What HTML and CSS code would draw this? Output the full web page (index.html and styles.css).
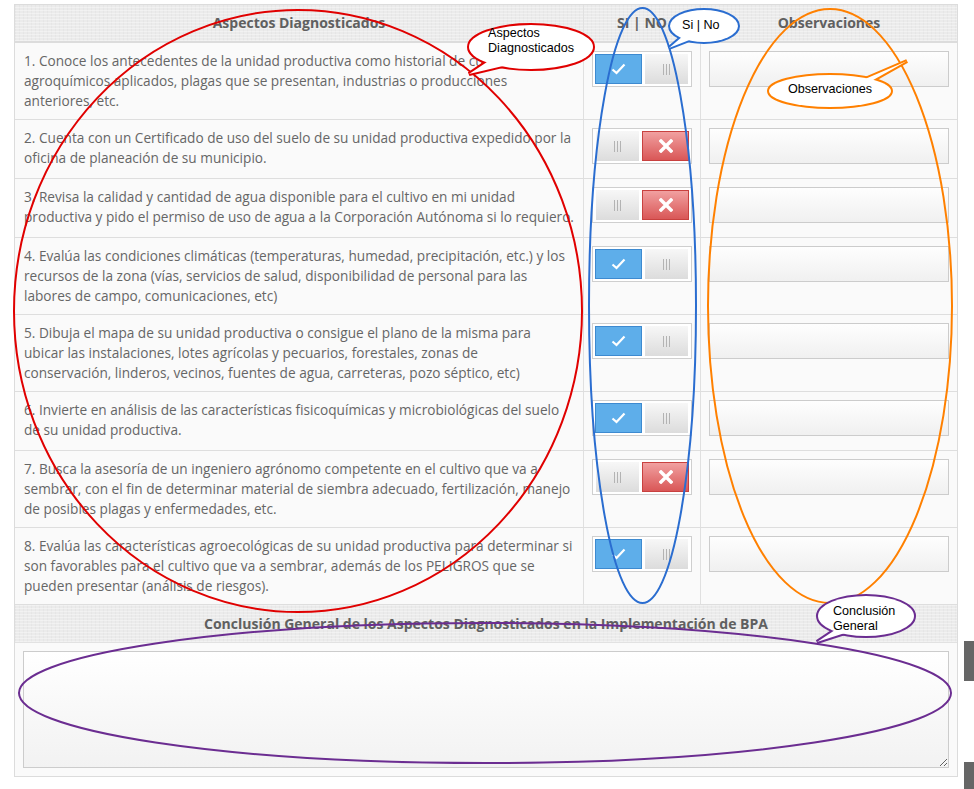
FILE: index.html
```html
<!DOCTYPE html>
<html lang="es">
<head>
<meta charset="utf-8">
<title>Aspectos Diagnosticados</title>
<link rel="stylesheet" href="styles.css">
</head>
<body>
<div class="page">
  <div class="sheet">
    <div class="row head">
      <div class="cell hq">Aspectos Diagnosticados</div>
      <div class="cell ht">SI | NO</div>
      <div class="cell ho">Observaciones</div>
    </div>

    <div class="row">
      <div class="cell q">1. Conoce los antecedentes de la unidad productiva como historial de cultivos,<br>agroquímicos aplicados, plagas que se presentan, industrias o producciones<br>anteriores, etc.</div>
      <div class="cell t"><div class="toggle yes"><span class="btn on"><svg width="15" height="12" viewBox="0 0 15 12"><path d="M1.5 6.5 L5.5 10 L13.5 1.5" fill="none" stroke="#fff" stroke-width="2.2"/></svg></span><span class="btn off"><i></i><i></i><i></i></span></div></div>
      <div class="cell o"><div class="obs"></div></div>
    </div>

    <div class="row">
      <div class="cell q">2. Cuenta con un Certificado de uso del suelo de su unidad productiva expedido por la<br>oficina de planeación de su municipio.</div>
      <div class="cell t"><div class="toggle no"><span class="btn off"><i></i><i></i><i></i></span><span class="btn neg"><svg width="14" height="14" viewBox="0 0 14 14"><path d="M2 2 L12 12 M12 2 L2 12" stroke="#fff" stroke-width="3.4" stroke-linecap="square"/></svg></span></div></div>
      <div class="cell o"><div class="obs"></div></div>
    </div>

    <div class="row">
      <div class="cell q">3. Revisa la calidad y cantidad de agua disponible para el cultivo en mi unidad<br>productiva y pido el permiso de uso de agua a la Corporación Autónoma si lo requiero.</div>
      <div class="cell t"><div class="toggle no"><span class="btn off"><i></i><i></i><i></i></span><span class="btn neg"><svg width="14" height="14" viewBox="0 0 14 14"><path d="M2 2 L12 12 M12 2 L2 12" stroke="#fff" stroke-width="3.4" stroke-linecap="square"/></svg></span></div></div>
      <div class="cell o"><div class="obs"></div></div>
    </div>

    <div class="row">
      <div class="cell q">4. Evalúa las condiciones climáticas (temperaturas, humedad, precipitación, etc.) y los<br>recursos de la zona (vías, servicios de salud, disponibilidad de personal para las<br>labores de campo, comunicaciones, etc)</div>
      <div class="cell t"><div class="toggle yes"><span class="btn on"><svg width="15" height="12" viewBox="0 0 15 12"><path d="M1.5 6.5 L5.5 10 L13.5 1.5" fill="none" stroke="#fff" stroke-width="2.2"/></svg></span><span class="btn off"><i></i><i></i><i></i></span></div></div>
      <div class="cell o"><div class="obs"></div></div>
    </div>

    <div class="row">
      <div class="cell q">5. Dibuja el mapa de su unidad productiva o consigue el plano de la misma para<br>ubicar las instalaciones, lotes agrícolas y pecuarios, forestales, zonas de<br>conservación, linderos, vecinos, fuentes de agua, carreteras, pozo séptico, etc)</div>
      <div class="cell t"><div class="toggle yes"><span class="btn on"><svg width="15" height="12" viewBox="0 0 15 12"><path d="M1.5 6.5 L5.5 10 L13.5 1.5" fill="none" stroke="#fff" stroke-width="2.2"/></svg></span><span class="btn off"><i></i><i></i><i></i></span></div></div>
      <div class="cell o"><div class="obs"></div></div>
    </div>

    <div class="row">
      <div class="cell q">6. Invierte en análisis de las características fisicoquímicas y microbiológicas del suelo<br>de su unidad productiva.</div>
      <div class="cell t"><div class="toggle yes"><span class="btn on"><svg width="15" height="12" viewBox="0 0 15 12"><path d="M1.5 6.5 L5.5 10 L13.5 1.5" fill="none" stroke="#fff" stroke-width="2.2"/></svg></span><span class="btn off"><i></i><i></i><i></i></span></div></div>
      <div class="cell o"><div class="obs"></div></div>
    </div>

    <div class="row">
      <div class="cell q">7. Busca la asesoría de un ingeniero agrónomo competente en el cultivo que va a<br>sembrar, con el fin de determinar material de siembra adecuado, fertilización, manejo<br>de posibles plagas y enfermedades, etc.</div>
      <div class="cell t"><div class="toggle no"><span class="btn off"><i></i><i></i><i></i></span><span class="btn neg"><svg width="14" height="14" viewBox="0 0 14 14"><path d="M2 2 L12 12 M12 2 L2 12" stroke="#fff" stroke-width="3.4" stroke-linecap="square"/></svg></span></div></div>
      <div class="cell o"><div class="obs"></div></div>
    </div>

    <div class="row">
      <div class="cell q">8. Evalúa las características agroecológicas de su unidad productiva para determinar si<br>son favorables para el cultivo que va a sembrar, además de los PELIGROS que se<br>pueden presentar (análisis de riesgos).</div>
      <div class="cell t"><div class="toggle yes"><span class="btn on"><svg width="15" height="12" viewBox="0 0 15 12"><path d="M1.5 6.5 L5.5 10 L13.5 1.5" fill="none" stroke="#fff" stroke-width="2.2"/></svg></span><span class="btn off"><i></i><i></i><i></i></span></div></div>
      <div class="cell o"><div class="obs"></div></div>
    </div>

    <div class="concl-head">Conclusión General de los Aspectos Diagnosticados en la Implementación de BPA</div>
    <div class="concl-body"><textarea class="concl-text"></textarea></div>
  </div>

  <svg class="marks" width="974" height="789" viewBox="0 0 974 789">
    <rect x="964" y="641" width="10" height="40" fill="#666"/>
    <rect x="964" y="762" width="10" height="27" fill="#666"/>

    <ellipse cx="298" cy="311" rx="284" ry="301" fill="none" stroke="#e00000" stroke-width="2"/>
    <ellipse cx="642.5" cy="305.5" rx="53.5" ry="297.5" fill="none" stroke="#2a6dd0" stroke-width="2"/>
    <ellipse cx="830" cy="306" rx="122" ry="297" fill="none" stroke="#ff8000" stroke-width="2"/>
    <ellipse cx="485" cy="693" rx="466" ry="70" fill="none" stroke="#6b2d91" stroke-width="2"/>

    <g fill="#fff" stroke="#e00000" stroke-width="4">
      <ellipse cx="531" cy="47" rx="62" ry="22"/>
      <polygon points="490,60 469,74 503,66"/>
    </g>
    <g fill="#fff">
      <ellipse cx="531" cy="47" rx="62" ry="22"/>
      <polygon points="490,60 469,74 503,66"/>
    </g>

    <g fill="#fff" stroke="#2a6dd0" stroke-width="4">
      <ellipse cx="704" cy="26" rx="34" ry="16"/>
      <polygon points="683,36 669,48 692,39"/>
    </g>
    <g fill="#fff">
      <ellipse cx="704" cy="26" rx="34" ry="16"/>
      <polygon points="683,36 669,48 692,39"/>
    </g>

    <g fill="#fff" stroke="#ff8000" stroke-width="4">
      <ellipse cx="830" cy="91" rx="61" ry="16"/>
      <polygon points="858,82 907,61 866,84"/>
    </g>
    <g fill="#fff">
      <ellipse cx="830" cy="91" rx="61" ry="16"/>
      <polygon points="858,82 907,61 866,84"/>
    </g>

    <g fill="#fff" stroke="#6b2d91" stroke-width="4">
      <ellipse cx="866" cy="616" rx="48" ry="20"/>
      <polygon points="838,628 817,642 848,632"/>
    </g>
    <g fill="#fff">
      <ellipse cx="866" cy="616" rx="48" ry="20"/>
      <polygon points="838,628 817,642 848,632"/>
    </g>

    <g class="note">
      <text x="488" y="37">Aspectos</text>
      <text x="488" y="52">Diagnosticados</text>
      <text x="682" y="29">Si | No</text>
      <text x="788" y="93">Observaciones</text>
      <text x="833" y="615">Conclusión</text>
      <text x="833" y="630">General</text>
    </g>
  </svg>
</div>
</body>
</html>
```

FILE: styles.css
```css
html, body {
  margin: 0;
  padding: 0;
  background: #fff;
}

body {
  font-family: "Open Sans", "DejaVu Sans", sans-serif;
  color: #666;
}

.page {
  position: relative;
  width: 974px;
  height: 789px;
  overflow: hidden;
  box-sizing: border-box;
  padding: 4px 0 0 14px;
}

.sheet {
  width: 944px;
  box-sizing: border-box;
  border: 1px solid #dcdcdc;
  border-bottom: none;
}

.row {
  display: grid;
  grid-template-columns: 569px 117px 256px;
  border-bottom: 1px solid #dedede;
  background: #fafafa;
}

.cell {
  box-sizing: border-box;
  border-right: 1px solid #e0e0e0;
}

.cell.o,
.cell.ho {
  border-right: none;
}

.head {
  height: 38px;
  border-bottom: 2px solid #dcdcdc;
  box-sizing: border-box;
  background-color: #ebebeb;
  background-image:
    repeating-linear-gradient(0deg, rgba(255,255,255,0.35) 0 1px, transparent 1px 3px),
    repeating-linear-gradient(90deg, rgba(0,0,0,0.025) 0 1px, transparent 1px 4px);
}

.hq, .ht, .ho {
  font-size: 14px;
  font-weight: 700;
  line-height: 36px;
  text-align: center;
  color: #606060;
}

.q {
  padding: 8px 9px;
  font-size: 13.65px;
  line-height: 20px;
  color: #666;
  white-space: nowrap;
}

.t {
  padding: 8px 8px 14px;
}

.o {
  padding: 8px 8px;
}

.toggle {
  width: 100px;
  height: 36px;
  box-sizing: border-box;
  border: 1px solid #cfcfcf;
  background: #fff;
  display: flex;
  align-items: center;
  justify-content: space-between;
}

.toggle.yes {
  padding: 0 3px 0 2px;
}

.toggle.no {
  padding: 0 2px 0 3px;
}

.btn {
  box-sizing: border-box;
  display: flex;
  align-items: center;
  justify-content: center;
}

.btn.on {
  width: 47px;
  height: 30px;
  background: #5eaeea;
  border: 1px solid #3d8ad0;
}

.btn.neg {
  width: 47px;
  height: 30px;
  background: linear-gradient(#f1a0a0, #d95757);
  border: 1px solid #c8413f;
}

.btn.off {
  width: 43px;
  height: 30px;
  gap: 2px;
  background: linear-gradient(#f7f7f7, #dcdcdc);
}

.btn.off i {
  display: block;
  width: 1px;
  height: 11px;
  background: #b3b3b3;
}

.obs {
  height: 36px;
  box-sizing: border-box;
  border: 1px solid #cccccc;
  background: linear-gradient(#fefefe, #f0f0f0);
}

.concl-head {
  height: 37px;
  line-height: 37px;
  text-align: center;
  font-size: 14px;
  font-weight: 700;
  color: #606060;
  border-bottom: 1px solid #e2e2e2;
  background-color: #ebebeb;
  background-image:
    repeating-linear-gradient(0deg, rgba(255,255,255,0.35) 0 1px, transparent 1px 3px),
    repeating-linear-gradient(90deg, rgba(0,0,0,0.025) 0 1px, transparent 1px 4px);
}

.concl-body {
  padding: 8px 8px 8px 8px;
  background: #fafafa;
  border-bottom: 1px solid #dcdcdc;
}

.concl-text {
  display: block;
  width: 926px;
  height: 117px;
  box-sizing: border-box;
  margin: 0;
  border: 1px solid #cccccc;
  background: linear-gradient(#ffffff, #f2f2f2);
  resize: both;
  font-family: "Open Sans", sans-serif;
}

.marks {
  position: absolute;
  top: 0;
  left: 0;
  pointer-events: none;
}

.note text {
  font-family: "Liberation Sans", Arial, sans-serif;
  font-size: 12.6px;
  fill: #000;
}
```
